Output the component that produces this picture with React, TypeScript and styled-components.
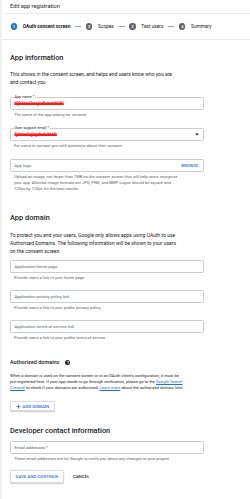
import React from "react";
import styled, { createGlobalStyle } from "styled-components";

const GlobalStyle = createGlobalStyle`
  html, body {
    margin: 0;
    padding: 0;
    background: #fff;
  }
  body {
    font-family: Roboto, "Liberation Sans", Arial, sans-serif;
    color: #202124;
  }
  * {
    box-sizing: border-box;
  }
`;

const PageStyled = styled.div`
  width: 250px;
  min-height: 499px;
  border-left: 2px solid #eef0f2;
  background: #fff;
`;

const HeaderStyled = styled.div`
  height: 14px;
  display: flex;
  align-items: center;
  padding: 0 0 1px 8px;
  border-bottom: 1px solid #e8eaed;
  font-size: 5.6px;
  color: #202124;
`;

const StepperStyled = styled.div`
  height: 26px;
  display: flex;
  align-items: center;
  padding-left: 8.7px;
  border-bottom: 1px solid #e8eaed;
`;

const StepStyled = styled.div`
  display: flex;
  align-items: center;
`;

const StepCircleStyled = styled.span<{ active?: boolean }>`
  width: 6.4px;
  height: 6.4px;
  border-radius: 50%;
  background: ${(p) => (p.active ? "#1a73e8" : "#5f6368")};
  color: #fff;
  font-size: 4px;
  font-weight: 700;
  display: flex;
  align-items: center;
  justify-content: center;
  margin-right: 5.6px;
`;

const StepLabelStyled = styled.span<{ active?: boolean }>`
  font-size: 4.8px;
  font-weight: ${(p) => (p.active ? 700 : 400)};
  color: #202124;
  white-space: nowrap;
`;

const ConnectorStyled = styled.span`
  width: 6px;
  height: 0.7px;
  background: #9aa0a6;
  margin: 0 4.8px;
`;

const ContentStyled = styled.div`
  padding: 0 46px 0 8px;
`;

const SectionTitleStyled = styled.h2<{ top: number }>`
  margin: ${(p) => p.top}px 0 0;
  font-size: 7.4px;
  line-height: 9px;
  font-weight: 500;
  color: #202124;
`;

const SubTitleStyled = styled.h3`
  margin: 19px 0 0;
  display: flex;
  align-items: center;
  font-size: 5.5px;
  line-height: 7px;
  font-weight: 500;
`;

const HelpIconStyled = styled.span`
  width: 5px;
  height: 5px;
  border-radius: 50%;
  background: #202124;
  color: #fff;
  font-size: 3.8px;
  font-weight: 700;
  display: inline-flex;
  align-items: center;
  justify-content: center;
  margin-left: 6px;
`;

const TextStyled = styled.p<{ top: number; size?: number; lh?: number }>`
  margin: ${(p) => p.top}px 0 0;
  font-size: ${(p) => p.size ?? 5}px;
  line-height: ${(p) => p.lh ?? 8}px;
  white-space: nowrap;
  color: #202124;
`;

const LinkStyled = styled.a`
  color: #1a73e8;
  text-decoration: underline;
`;

const FieldGroupStyled = styled.div<{ top: number }>`
  margin-top: ${(p) => p.top}px;
`;

const FieldBoxStyled = styled.div`
  position: relative;
  height: 13px;
  border: 0.8px solid #c8cbcf;
  border-radius: 1.5px;
  display: flex;
  align-items: center;
  padding: 0 4.5px 0 3.5px;
`;

const FloatLabelStyled = styled.span`
  position: absolute;
  left: 2.5px;
  top: -2.6px;
  padding: 0 1px;
  background: #fff;
  font-size: 3.8px;
  line-height: 4.5px;
  color: #202124;
`;

const PlaceholderStyled = styled.span`
  flex: 1;
  font-size: 4.2px;
  color: #5f6368;
`;

const RequiredStyled = styled.span`
  color: #d93025;
`;

const RedactedStyled = styled.span`
  flex: 1;
  font-size: 4.6px;
  font-weight: 700;
  color: #e53935;
  text-decoration: line-through 1.6px #ff1a1a;
  white-space: nowrap;
`;

const BrowseStyled = styled.span`
  font-size: 4.2px;
  font-weight: 500;
  color: #1a73e8;
  letter-spacing: 0.1px;
`;

const HelperStyled = styled.div<{ lh?: number }>`
  margin-top: 2px;
  padding-left: 4px;
  font-size: 4.1px;
  line-height: ${(p) => p.lh ?? 5}px;
  color: #5f6368;
  white-space: nowrap;
`;

const ButtonRowStyled = styled.div<{ top: number }>`
  margin-top: ${(p) => p.top}px;
  display: flex;
  align-items: center;
  gap: 9px;
`;

const ButtonStyled = styled.button<{ h: number; outlined?: boolean }>`
  height: ${(p) => p.h}px;
  display: inline-flex;
  align-items: center;
  gap: 2px;
  padding: 0 ${(p) => (p.outlined ? 4.5 : 0)}px;
  border: ${(p) => (p.outlined ? "0.6px solid #dadce0" : "none")};
  border-radius: 1.5px;
  background: #fff;
  box-shadow: ${(p) => (p.outlined ? "0 0.5px 1px rgba(60,64,67,0.25)" : "none")};
  color: ${(p) => (p.outlined ? "#1a73e8" : "#202124")};
  font-family: inherit;
  font-size: 4.3px;
  font-weight: 500;
  letter-spacing: 0.05px;
  cursor: pointer;
`;

const Field: React.FC<{
  label: string;
  required?: boolean;
  value?: string;
  floated?: boolean;
  helper: React.ReactNode;
  trailing?: React.ReactNode;
  top: number;
  helperLh?: number;
}> = ({ label, required, value, floated, helper, trailing, top, helperLh }) => (
  <FieldGroupStyled top={top}>
    <FieldBoxStyled>
      {floated ? (
        <>
          <FloatLabelStyled>
            {label}
            {required && " *"}
          </FloatLabelStyled>
          <RedactedStyled>{value}</RedactedStyled>
        </>
      ) : (
        <PlaceholderStyled>
          {label}
          {required && <RequiredStyled> *</RequiredStyled>}
        </PlaceholderStyled>
      )}
      {trailing}
    </FieldBoxStyled>
    <HelperStyled lh={helperLh}>{helper}</HelperStyled>
  </FieldGroupStyled>
);

const steps = ["OAuth consent screen", "Scopes", "Test users", "Summary"];

export default function App() {
  return (
    <PageStyled>
      <GlobalStyle />
      <HeaderStyled>Edit app registration</HeaderStyled>
      <StepperStyled>
        {steps.map((step, i) => (
          <React.Fragment key={step}>
            {i > 0 && <ConnectorStyled />}
            <StepStyled>
              <StepCircleStyled active={i === 0}>{i + 1}</StepCircleStyled>
              <StepLabelStyled active={i === 0}>{step}</StepLabelStyled>
            </StepStyled>
          </React.Fragment>
        ))}
      </StepperStyled>

      <ContentStyled>
        <SectionTitleStyled top={12.5}>App information</SectionTitleStyled>
        <TextStyled top={8} lh={8.5}>
          This shows in the consent screen, and helps end users know who you are
          <br />
          and contact you
        </TextStyled>

        <Field
          top={10}
          label="App name"
          required
          floated
          value="Hjhhmdkasjsdkmmbldtl"
          helper="The name of the app asking for consent"
        />
        <Field
          top={11}
          label="User support email"
          required
          floated
          value="fjdmcdsjhgdsdsbtab"
          helper="For users to contact you with questions about their consent"
          trailing={
            <svg width="4" height="3" viewBox="0 0 10 5">
              <path d="M0 0 L5 5 L10 0 Z" fill="#202124" />
            </svg>
          }
        />
        <Field
          top={11}
          label="App logo"
          helperLh={6}
          helper={
            <>
              Upload an image, not larger than 1MB on the consent screen that will help users recognize
              <br />
              your app. Allowed image formats are JPG, PNG, and BMP. Logos should be square and
              <br />
              120px by 120px for the best results.
            </>
          }
          trailing={<BrowseStyled>BROWSE</BrowseStyled>}
        />

        <SectionTitleStyled top={21}>App domain</SectionTitleStyled>
        <TextStyled top={9.5}>
          To protect you and your users, Google only allows apps using OAuth to use
          <br />
          Authorized Domains. The following information will be shown to your users
          <br />
          on the consent screen.
        </TextStyled>

        <Field top={5} label="Application home page" helper="Provide users a link to your home page" />
        <Field
          top={10}
          label="Application privacy policy link"
          helper="Provide users a link to your public privacy policy"
        />
        <Field
          top={10}
          label="Application terms of service link"
          helper="Provide users a link to your public terms of service"
        />

        <SubTitleStyled>
          Authorized domains
          <HelpIconStyled>?</HelpIconStyled>
        </SubTitleStyled>
        <TextStyled top={7.3} size={4.1} lh={6}>
          When a domain is used on the consent screen or in an OAuth client's configuration, it must be
          <br />
          pre-registered here. If your app needs to go through verification, please go to the{" "}
          <LinkStyled>Google Search</LinkStyled>
          <br />
          <LinkStyled>Console</LinkStyled> to check if your domains are authorized.{" "}
          <LinkStyled>Learn more</LinkStyled> about the authorized domain limit.
        </TextStyled>

        <ButtonRowStyled top={10}>
          <ButtonStyled h={10} outlined>
            <svg width="5" height="5" viewBox="0 0 10 10">
              <path d="M5 1 V9 M1 5 H9" stroke="#1a73e8" strokeWidth="1.6" />
            </svg>
            ADD DOMAIN
          </ButtonStyled>
        </ButtonRowStyled>

        <SectionTitleStyled top={15}>Developer contact information</SectionTitleStyled>
        <Field
          top={6}
          label="Email addresses"
          required
          helper="These email addresses are for Google to notify you about any changes to your project."
        />

        <ButtonRowStyled top={9}>
          <ButtonStyled h={12.6} outlined>
            SAVE AND CONTINUE
          </ButtonStyled>
          <ButtonStyled h={12.6}>CANCEL</ButtonStyled>
        </ButtonRowStyled>
      </ContentStyled>
    </PageStyled>
  );
}
